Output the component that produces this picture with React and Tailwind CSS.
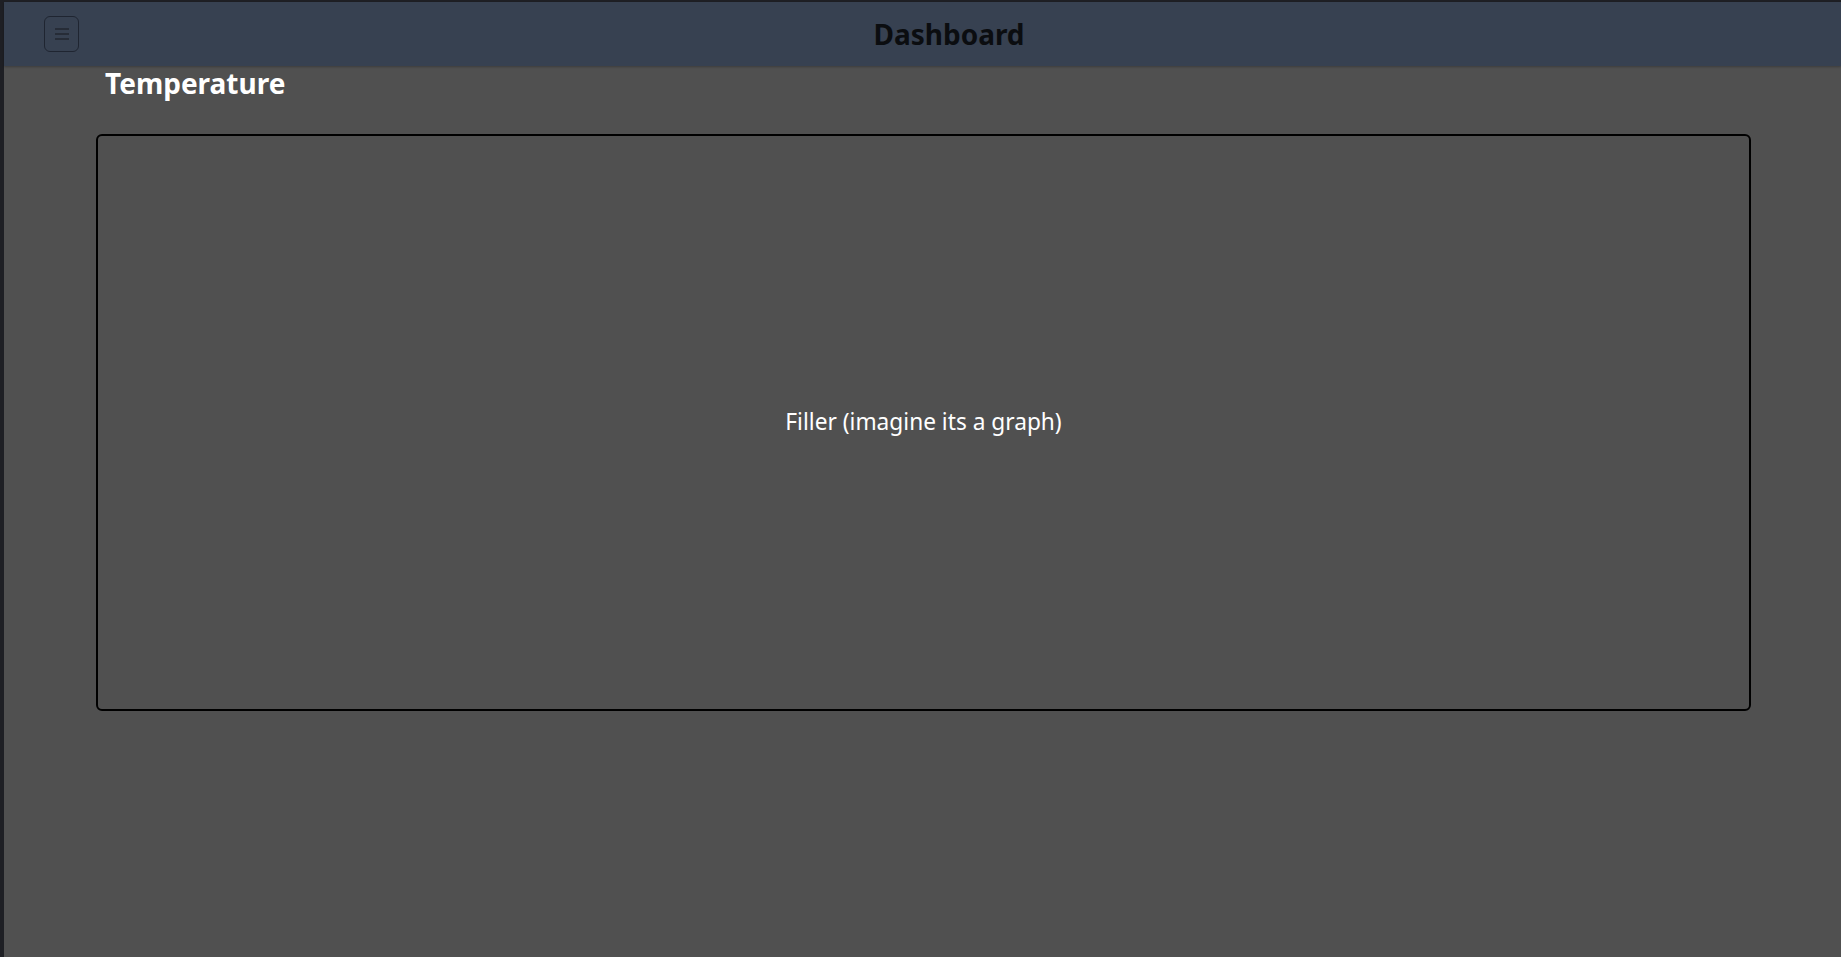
export default function App() {
  return (
    <div className="flex h-screen w-full bg-[#1e1f24] pt-[2px] pl-[4px]" style={{ fontFamily: '"Noto Sans", "Open Sans", sans-serif' }}>
      <div className="flex flex-1 flex-col bg-[#505050]">
        <header className="flex h-[64px] shrink-0 items-center bg-[#374151] pl-[40px] pr-[22px] shadow-[0_1px_2px_rgba(0,0,0,0.25)]">
          <button className="flex h-[36px] w-[35px] items-center justify-center rounded-md border border-[#1f2531]">
            <svg width="14" height="12" viewBox="0 0 14 12" fill="none">
              <line x1="0" y1="1" x2="14" y2="1" stroke="#222831" strokeWidth="1.6" />
              <line x1="0" y1="6" x2="14" y2="6" stroke="#222831" strokeWidth="1.6" />
              <line x1="0" y1="11" x2="14" y2="11" stroke="#222831" strokeWidth="1.6" />
            </svg>
          </button>
          <h1 className="flex-1 text-center text-[28px] font-bold leading-none text-[#0b0d10]">Dashboard</h1>
        </header>
        <main className="flex flex-1 flex-col">
          <h2 className="ml-[101px] mt-0 text-[28px] font-bold leading-[34px] text-white">Temperature</h2>
          <div className="ml-[92px] mt-[34px] flex h-[577px] w-[1655px] items-center justify-center rounded-md border-2 border-black">
            <span className="text-[22.7px] text-white">Filler (imagine its a graph)</span>
          </div>
        </main>
      </div>
    </div>
  );
}
